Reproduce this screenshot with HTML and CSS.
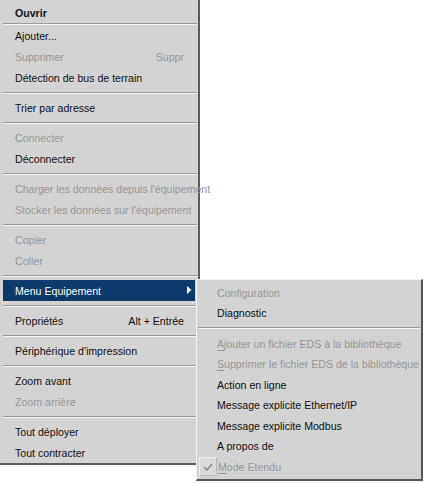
FILE: index.html
```html
<!DOCTYPE html>
<html lang="fr">
<head>
<meta charset="utf-8">
<title>Menu</title>
<link rel="stylesheet" href="styles.css">
</head>
<body>
<div class="menu main">
  <div class="item bold">Ouvrir</div>
  <div class="sep tight"></div>
  <div class="item">Ajouter...</div>
  <div class="item disabled"><span>Supprimer</span><span class="key">Suppr</span></div>
  <div class="item">Détection de bus de terrain</div>
  <div class="sep"></div>
  <div class="item">Trier par adresse</div>
  <div class="sep"></div>
  <div class="item disabled">Connecter</div>
  <div class="item">Déconnecter</div>
  <div class="sep"></div>
  <div class="item disabled">Charger les données depuis l'équipement</div>
  <div class="item disabled">Stocker les données sur l'équipement</div>
  <div class="sep"></div>
  <div class="item disabled">Copier</div>
  <div class="item disabled">Coller</div>
  <div class="sep"></div>
  <div class="item active"><span>Menu Equipement</span><svg class="arrow" width="5" height="8" viewBox="0 0 5 8"><polygon points="0,0 4.5,4 0,8" fill="#fff"/></svg></div>
  <div class="sep"></div>
  <div class="item"><span>Propriétés</span><span class="key">Alt + Entrée</span></div>
  <div class="sep"></div>
  <div class="item">Périphérique d'impression</div>
  <div class="sep"></div>
  <div class="item">Zoom avant</div>
  <div class="item disabled">Zoom arrière</div>
  <div class="sep"></div>
  <div class="item">Tout déployer</div>
  <div class="item">Tout contracter</div>
</div>
<div class="menu sub">
  <div class="item disabled">Configuration</div>
  <div class="item">Diagnostic</div>
  <div class="sep"></div>
  <div class="item disabled"><span><u>A</u>jouter un fichier EDS à la bibliothèque</span></div>
  <div class="item disabled"><span><u>S</u>upprimer le fichier EDS de la bibliothèque</span></div>
  <div class="item">Action en ligne</div>
  <div class="item">Message explicite Ethernet/IP</div>
  <div class="item">Message explicite Modbus</div>
  <div class="item">A propos de</div>
  <div class="item disabled checked"><span class="check"><svg width="10" height="8" viewBox="0 0 10 8"><polyline points="1,4 4,7 9,1" fill="none" stroke="#8a8a8a" stroke-width="1.6"/></svg></span><span><u>M</u>ode Etendu</span></div>
</div>
</body>
</html>
```
FILE: styles.css
```css
html, body {
  margin: 0;
  padding: 0;
  background: #ffffff;
}
body {
  font-family: "Liberation Sans", Arial, sans-serif;
  font-size: 10.6px;
  color: #111;
  position: relative;
  width: 424px;
  height: 483px;
  overflow: hidden;
}
.menu {
  box-sizing: border-box;
  background: #d3d3d3;
}
.main {
  width: 200px;
  padding: 2px 3px 0 3px;
  border-right: 2px solid #5a5a5a;
  border-bottom: 2px solid #5a5a5a;
}
.item {
  height: 21px;
  display: flex;
  align-items: center;
  justify-content: space-between;
  padding: 1px 11px 0 12px;
  box-sizing: border-box;
  white-space: nowrap;
}
.main .item.bold {
  font-weight: bold;
  height: 20px;
}
.disabled {
  color: #959595;
}
.item.active {
  background: #0b3a6b;
  color: #fff;
  padding-right: 3px;
}
.arrow {
  display: block;
  margin-top: -2px;
}
.sep {
  height: 9px;
  display: flex;
  align-items: center;
}
.main .sep {
  margin-right: -2px;
}
.sep.tight {
  height: 3px;
}
.sep::before {
  content: "";
  flex: 1;
  border-top: 1px solid #9a9a9a;
  border-bottom: 1px solid #f4f4f4;
}
.sub {
  position: absolute;
  left: 196px;
  top: 279px;
  width: 227px;
  padding: 2px 1px 2px 1px;
  border-top: 1px solid #f2f2f2;
  border-left: 1px solid #f2f2f2;
  border-right: 2px solid #555;
  border-bottom: 2px solid #555;
}
.sub .item {
  height: 20.5px;
  padding-left: 19px;
  justify-content: flex-start;
}
.sub .sep {
  height: 10px;
}
.sub .item.checked {
  padding-left: 1px;
  gap: 1px;
}
.check {
  width: 18px;
  height: 19px;
  box-sizing: border-box;
  background: #dadada;
  border-top: 1px solid #f0f0f0;
  border-left: 1px solid #f0f0f0;
  border-right: 1px solid #b5b5b5;
  border-bottom: 1px solid #b5b5b5;
  display: flex;
  align-items: center;
  justify-content: center;
}
u {
  text-decoration: underline;
  text-underline-offset: 2px;
}
```
